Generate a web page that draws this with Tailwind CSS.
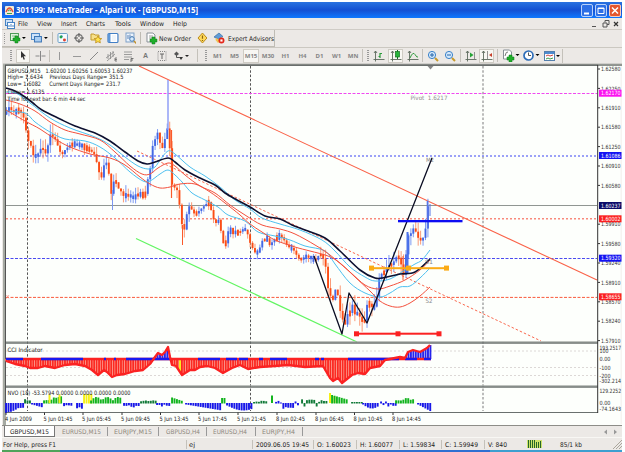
<!DOCTYPE html>
<html lang="en">
<head>
<meta charset="utf-8">
<title>301199: MetaTrader - Alpari UK - [GBPUSD,M15]</title>
<script src="https://cdn.jsdelivr.net/npm/@tailwindcss/browser@4"></script>
</head>
<body class="w-[625px] h-[452px] overflow-hidden bg-white font-['DejaVu_Sans','Noto_Sans',sans-serif] text-[6.5px] leading-none text-[#222]">
<svg class="hidden">
  <defs>
    <g id="plus"><path d="M7 6h3v2h2v3h-2v2h-3v-2h-2v-3h2z" fill="#1fae2a" stroke="#0b7a18" stroke-width=".5"/></g>
    <g id="lens"><circle cx="5" cy="5" r="3.6" fill="#d5e9fb" stroke="#3b82c9"/><path d="M8 8l3 3" stroke="#c89a2c" stroke-width="2"/></g>
    <g id="axes"><path d="M2.5 1v10.5M0.5 9.5h11M1 3l1.5-2L4 3" fill="none" stroke="#5c6a5c" stroke-width=".9"/></g>
  </defs>
</svg>
<div class="mt-[2px] ml-[2px] w-[620px] h-[450px] flex flex-col bg-[#ece9e6]">
  <!-- title bar -->
  <header class="h-[16px] shrink-0 flex items-center pl-[3px] pr-[1px] bg-linear-to-b from-[#2a72e0] via-[#1550d2] to-[#0e78ff] text-white">
    <svg class="w-[9px] h-[9px]" viewBox="0 0 9 9"><rect width="9" height="9" rx="1" fill="#f3ead6"/><path d="M1 6Q4.500-2 8 6" fill="none" stroke="#e0523c" stroke-width="1.4"/><path d="M2 7.500h5M3 5l1.500-1L6 5" stroke="#3a9f4c" fill="none"/></svg>
    <h1 class="ml-[2px] font-bold text-[8.500px] font-['Noto_Sans',sans-serif]"><span data-fit="182">301199: MetaTrader - Alpari UK - [GBPUSD,M15]</span></h1>
    <div class="ml-auto flex gap-[2px]">
      <svg class="w-[12px] h-[13px]" viewBox="0 0 12 13"><rect x=".5" y=".5" width="11" height="12" rx="1.500" fill="#2d6fe6" stroke="#b9d2fa"/><path d="M3 9.500h5" stroke="#fff" stroke-width="2"/></svg>
      <svg class="w-[12px] h-[13px]" viewBox="0 0 12 13"><rect x=".5" y=".5" width="11" height="12" rx="1.500" fill="#2d6fe6" stroke="#b9d2fa"/><path d="M3 4h6v5.500H3zM3 4.500h6" fill="none" stroke="#fff"/></svg>
      <svg class="w-[12px] h-[13px]" viewBox="0 0 12 13"><rect x=".5" y=".5" width="11" height="12" rx="1.500" fill="#e4572f" stroke="#f6cdbf"/><path d="M3 3.500l6 6M9 3.500l-6 6" stroke="#fff" stroke-width="1.500"/></svg>
    </div>
  </header>
  <!-- menu bar -->
  <nav class="h-[12px] shrink-0 flex items-center border-b border-[#cfccc6] pl-[3px]">
    <svg class="w-[10px] h-[10px]" viewBox="0 0 10 10"><rect x=".5" y=".5" width="7" height="6" fill="#cfe2f7" stroke="#4683c4"/><rect x="2.500" y="3.500" width="7" height="6" fill="#fff" stroke="#4683c4"/><path d="M4 8V6M6 8V5M8 8V6" stroke="#4683c4"/></svg>
    <span class="ml-[3px] w-[19px]" data-fit="10">File</span>
    <span class="w-[24px]" data-fit="15">View</span>
    <span class="w-[25px]" data-fit="16">Insert</span>
    <span class="w-[29px]" data-fit="19">Charts</span>
    <span class="w-[25px]" data-fit="16">Tools</span>
    <span class="w-[33px]" data-fit="24">Window</span>
    <span class="w-[25px]" data-fit="14">Help</span>
    <svg class="ml-auto mr-[2px] w-[30px] h-[10px]" viewBox="0 0 30 10"><path d="M2 7.500h4M13 4h4v4h-4zM15 3.500v-2h4v4h-2" fill="none" stroke="#555"/><path d="M24 3l4 4M28 3l-4 4" stroke="#333" stroke-width="1.200"/></svg>
  </nav>
  <!-- standard toolbar -->
  <div class="h-[17px] shrink-0 flex items-stretch">
    <div class="w-[273px] flex items-center border-r border-b border-[#bfbcb4]">
      <i class="ml-[2px] h-[11px] w-[2px] border-l border-dotted border-[#999]"></i>
      <svg class="ml-[3px] w-[18px] h-[12px]" viewBox="0 0 18 12"><rect x="1.500" y="1.500" width="8" height="7" fill="#e4f6e2" stroke="#4a9a55"/><path d="M3 4h5" stroke="#7cba80"/><use href="#plus" x="-1" y="-2"/><path d="M13 5h4l-2 2z"/></svg>
      <svg class="ml-[3px] w-[18px] h-[12px]" viewBox="0 0 18 12"><rect x="1.500" y="1.500" width="8" height="6" fill="#cfe4fa" stroke="#4a86c4"/><rect x="4.500" y="4.500" width="7" height="5.500" fill="#a8cdf2" stroke="#3b74b4"/><path d="M14 5h4l-2 2z"/></svg>
      <i class="mx-[4px] h-[12px] w-px bg-[#bdbab2]"></i>
      <svg class="w-[12px] h-[12px]" viewBox="0 0 12 12"><rect x="1" y="1.500" width="9.500" height="9" rx="1" fill="#f5fbff" stroke="#6b9fc8"/><path d="M3 4.500l2-1.500 1 2z" fill="#3a7ad2"/><circle cx="4" cy="5" r="1.500" fill="#22a34a"/><circle cx="7.500" cy="8" r="1.500" fill="#e0412f"/></svg>
      <svg class="ml-[4px] w-[12px] h-[12px]" viewBox="0 0 12 12"><circle cx="6" cy="6" r="3.300" fill="none" stroke="#777" stroke-width="1.200"/><path d="M6 1v4M6 7v4M1 6h4M7 6h4" stroke="#555"/></svg>
      <svg class="ml-[5px] w-[13px] h-[12px]" viewBox="0 0 13 12"><path d="M1 2h3l1 1h4v5H1z" fill="#f7e08a" stroke="#c29a2b"/><path d="M8 4l1.200 2.300 2.600.3-1.900 1.700.5 2.600L8 9.700l-2.400 1.200.5-2.600-1.900-1.700 2.600-.3z" fill="#ffe34d" stroke="#bd8b16" stroke-width=".8"/></svg>
      <svg class="ml-[4px] w-[12px] h-[12px]" viewBox="0 0 12 12"><rect x="1" y="1.500" width="10" height="9" rx="1" fill="#fff" stroke="#427fc5" stroke-width="1.200"/><path d="M1 2h2.500v8H1z" fill="#5d97d8"/><path d="M5 4h4M5 6h4M5 8h4" stroke="#c9dcef" stroke-width=".6"/></svg>
      <svg class="ml-[6px] w-[12px] h-[12px]" viewBox="0 0 12 12"><rect x="1" y="1" width="8" height="9" fill="#edf4fd" stroke="#7da0c7"/><path d="M3 7V3M5 6V2.500M7 7V4" stroke="#5a82b4"/><circle cx="7" cy="7" r="2.300" fill="#d9ebfc" stroke="#4379b2"/><path d="M9 9l2.500 2.500" stroke="#c08f2a" stroke-width="1.500"/></svg>
      <i class="mx-[4px] h-[12px] w-px bg-[#bdbab2]"></i>
      <svg class="ml-[1px] w-[12px] h-[13px]" viewBox="0 0 12 13"><path d="M1 1h6l2 2v7H1z" fill="#fff" stroke="#878f96"/><path d="M3 4h4M3 6h3" stroke="#999"/><use href="#plus" x="-1" y="-1"/></svg>
      <span class="ml-[1px] w-[38px]" data-fit="32">New Order</span>
      <svg class="w-[11px] h-[12px]" viewBox="0 0 11 12"><path d="M5.500 1L10 6l-4.500 5L1 6z" fill="#ffd95a" stroke="#b98a1c"/><path d="M5.500 3.500v3.200M5.500 8v1" stroke="#8a6510" stroke-width="1.200"/></svg>
      <svg class="ml-[5px] w-[12px] h-[12px]" viewBox="0 0 12 12"><path d="M1 5l5-4 4 3.500-4 3z" fill="#5f9bd6" stroke="#386fa6" stroke-width=".7"/><path d="M3 6l3 1.500L9 5v3.500L5 11 2.500 8z" fill="#f0c453"/><circle cx="8.500" cy="8.500" r="3" fill="#e3271b"/><rect x="7.400" y="7.400" width="2.200" height="2.200" fill="#fff"/></svg>
      <span class="ml-[3px]" data-fit="46">Expert Advisors</span>
    </div>
  </div>
  <!-- drawing, period and chart toolbars -->
  <div class="h-[16px] shrink-0 flex items-center border-t border-[#cbc8c1]">
    <i class="ml-[8px] mr-[4px] h-[11px] w-[2px] border-x border-dotted border-[#999]"></i>
    <span class="w-[14px] h-[14px] bg-[#f8f7f3] border border-[#cfccc4] flex items-center justify-center"><svg class="w-[8px] h-[10px]" viewBox="0 0 8 10"><path d="M2 0l5 5.200H4.700l1.200 3-1.200.6-1.300-3L2 7z" fill="#333"/></svg></span>
    <svg class="ml-[4px] w-[13px] h-[12px]" viewBox="0 0 13 12"><path d="M6.500 1v10M1.500 6h4M7.500 6h4" stroke="#888"/></svg>
    <i class="ml-[2px] h-[12px] w-px bg-[#c4c1ba]"></i>
    <svg class="ml-[4px] w-[12px] h-[12px]" viewBox="0 0 12 12"><path d="M5.500 2v8" stroke="#999"/></svg>
    <svg class="ml-[5px] w-[12px] h-[12px]" viewBox="0 0 12 12"><path d="M2 6.500h8" stroke="#999"/></svg>
    <svg class="ml-[5px] w-[12px] h-[12px]" viewBox="0 0 12 12"><path d="M2 10l8-8" stroke="#888"/></svg>
    <svg class="ml-[5px] w-[13px] h-[12px]" viewBox="0 0 13 12"><path d="M1 8l8-6M2 11l8-7M3 4v5M5.500 2v7M8 1v6" stroke="#888" stroke-width=".8"/><path d="M12 8h-2v3h2M10 9.500h2" stroke="#555" fill="none" stroke-width=".7"/></svg>
    <svg class="ml-[4px] w-[13px] h-[12px]" viewBox="0 0 13 12"><path d="M2 2h8M2 4.500h8M2 7h8M2 9.500h5" stroke="#888" stroke-width=".8"/><path d="M9 12V8.500h2.500M9 10h2" stroke="#555" fill="none" stroke-width=".8"/></svg>
    <span class="ml-[4px] w-[13px] text-center font-bold text-[7px] text-[#777] font-['Liberation_Sans',sans-serif]">A</span>
    <svg class="ml-[4px] w-[12px] h-[12px]" viewBox="0 0 12 12"><rect x="2" y="1.500" width="8" height="9" fill="none" stroke="#888" stroke-dasharray="1 1"/><path d="M4 4h4M6 4v5" stroke="#666"/></svg>
    <svg class="ml-[5px] w-[18px] h-[12px]" viewBox="0 0 18 12"><path d="M1 4l2.500-2.500L6 4 3.500 6z" fill="#555"/><path d="M3.500 5v2.500h3" fill="none" stroke="#555"/><path d="M6 7h4L8 10z" fill="#333"/><path d="M12 5h4l-2 2z" fill="#222"/></svg>
    <i class="ml-[6px] h-[13px] w-px bg-[#c4c1ba]"></i>
    <i class="ml-[7px] mr-[2px] h-[11px] w-[2px] border-x border-dotted border-[#999]"></i>
    <div class="flex items-center text-center text-[6px] font-bold font-['Noto_Sans',sans-serif] text-[#858585]">
      <span class="w-[17px]">M1</span><span class="w-[17px]">M5</span><span class="w-[16px] h-[14px] leading-[12px] bg-[#f8f7f3] border border-[#cfccc4]">M15</span><span class="w-[18px]">M30</span><span class="w-[17px]">H1</span><span class="w-[17px]">H4</span><span class="w-[17px]">D1</span><span class="w-[17px]">W1</span><span class="w-[16px]">MN</span>
    </div>
    <i class="ml-[1px] h-[13px] w-px bg-[#c4c1ba]"></i>
    <i class="ml-[4px] mr-[4px] h-[11px] w-[2px] border-x border-dotted border-[#999]"></i>
    <svg class="w-[12px] h-[12px]" viewBox="0 0 12 12"><use href="#axes"/><path d="M7 8V3M5.500 6.500H7M7 3.500h2" stroke="#2a9b3a" stroke-width="1.200"/></svg>
    <span class="ml-[3px] w-[15px] h-[14px] bg-[#f8f7f3] border border-[#cfccc4] flex items-center justify-center"><svg class="w-[12px] h-[12px]" viewBox="0 0 12 12"><use href="#axes"/><path d="M7.500 0v9" stroke="#136c20"/><rect x="5.500" y="1.500" width="4" height="5.500" fill="#27b53a" stroke="#147322" stroke-width=".7"/></svg></span>
    <svg class="ml-[4px] w-[12px] h-[12px]" viewBox="0 0 12 12"><use href="#axes"/><path d="M3 8Q6 1 8 4.500T11 7" fill="none" stroke="#2a9b3a"/></svg>
    <i class="ml-[3px] mr-[4px] h-[13px] w-px bg-[#c4c1ba]"></i>
    <svg class="w-[12px] h-[12px]" viewBox="0 0 12 12"><use href="#lens"/><path d="M3 5h4M5 3v4" stroke="#2464a8"/></svg>
    <svg class="ml-[5px] w-[12px] h-[12px]" viewBox="0 0 12 12"><use href="#lens"/><path d="M3 5h4" stroke="#2464a8"/></svg>
    <i class="ml-[4px] mr-[4px] h-[13px] w-px bg-[#c4c1ba]"></i>
    <svg class="w-[12px] h-[12px]" viewBox="0 0 12 12"><use href="#axes"/><path d="M5 2.500v5L8.500 5z" fill="#25a336"/><path d="M9.500 2v7" stroke="#777" stroke-width=".8"/></svg>
    <span class="ml-[2px] w-[15px] h-[14px] bg-[#f8f7f3] border border-[#cfccc4] flex items-center justify-center"><svg class="w-[12px] h-[12px]" viewBox="0 0 12 12"><use href="#axes"/><path d="M6.500 1v8" stroke="#777" stroke-width=".8"/><path d="M11 3v4L8 5z" fill="#c6402c"/></svg></span>
    <i class="ml-[3px] mr-[4px] h-[13px] w-px bg-[#c4c1ba]"></i>
    <svg class="w-[18px] h-[13px]" viewBox="0 0 18 13"><path d="M1.500 1h6l2 2v7h-8z" fill="#fff" stroke="#878f96"/><path d="M3 7q1-5 3-4" fill="none" stroke="#777"/><use href="#plus"/><path d="M13.500 5h4l-2 2z"/></svg>
    <svg class="ml-[3px] w-[18px] h-[13px]" viewBox="0 0 18 13"><circle cx="5.500" cy="6.500" r="4.500" fill="#fff" stroke="#2c6cb8" stroke-width="1.700"/><path d="M5.500 3.500v3h2.500" fill="none" stroke="#555"/><path d="M12.500 5h4l-2 2z"/></svg>
    <svg class="ml-[3px] w-[18px] h-[12px]" viewBox="0 0 18 12"><rect x=".5" y="1.500" width="10" height="9" fill="#fff" stroke="#5480ad"/><path d="M1 3h9" stroke="#4d8bd0" stroke-width="2"/><path d="M2 6l2-1 2 1 3-1" stroke="#c44" fill="none"/><path d="M2 9l2-1 2 1 3-1" stroke="#3a9c4a" fill="none"/><path d="M12 5h4l-2 2z"/></svg>
    <i class="h-[14px] w-px bg-[#c4c1ba]"></i>
  </div>
  <!-- chart window: units are window pixels -->
  <svg id="chart" class="w-[620px] h-[362px] shrink-0 block" viewBox="2 63 620 362" font-family="'DejaVu Sans','Noto Sans',sans-serif"></svg>
  <!-- chart tabs -->
  <div class="h-[12px] shrink-0 flex items-center text-[#8c887c] text-[6.3px] border-t border-[#8d8d88]">
    <span class="ml-[2px] w-[51px] h-[11px] bg-white border-x border-b border-[#777] text-[#222] pl-[5px] pt-px" data-fit="39">GBPUSD,M15</span>
    <span class="w-[53px] pl-[7px] border-r border-[#999]" data-fit="39">EURUSD,M15</span>
    <span class="w-[51px] pl-[6px] border-r border-[#999]" data-fit="38">EURJPY,M15</span>
    <span class="w-[48px] pl-[7px] border-r border-[#999]" data-fit="34">GBPUSD,H4</span>
    <span class="w-[49px] pl-[6px] border-r border-[#999]" data-fit="34">EURUSD,H4</span>
    <span class="w-[47px] pl-[6px] border-r border-[#999]" data-fit="33">EURJPY,H4</span>
    <svg class="ml-auto mr-[2px] w-[18px] h-[8px]" viewBox="0 0 18 8"><path d="M5 1.500v5L2 4zM12 1.500v5L15 4z" fill="#999"/></svg>
  </div>
  <!-- status bar -->
  <footer class="h-[13px] shrink-0 flex items-center border-t border-[#f8f7f4] text-[#222]">
    <span class="ml-[1px] w-[183px]" data-fit="53">For Help, press F1</span>
    <span class="w-[66px] border-l border-[#c4c1ba] pl-[2px]" data-fit="6">ej</span>
    <span class="w-[61px] border-l border-[#c4c1ba] pl-[3px]" data-fit="53">2009.06.05 19:45</span>
    <span class="w-[43px] border-l border-[#c4c1ba] pl-[3px]" data-fit="34">O: 1.60023</span>
    <span class="w-[43px] border-l border-[#c4c1ba] pl-[3px]" data-fit="33">H: 1.60077</span>
    <span class="w-[42px] border-l border-[#c4c1ba] pl-[3px]" data-fit="32">L: 1.59834</span>
    <span class="w-[43px] border-l border-[#c4c1ba] pl-[3px]" data-fit="33">C: 1.59949</span>
    <span class="w-[40px] border-l border-[#c4c1ba] pl-[3px]" data-fit="19">V: 840</span>
    <svg class="ml-[3px] w-[15px] h-[8px]" viewBox="0 0 15 8"><rect width="15" height="8" fill="#cde36a"/><path d="M1.500 0v8M3.500 0v8M5.500 0v8M7.500 0v8M9.500 2v6M11.500 2v6M13.500 1v7" stroke="#25652b"/></svg>
    <span class="ml-[18px]" data-fit="22">85/1 kb</span>
    <svg class="ml-auto w-[9px] h-[9px]" viewBox="0 0 9 9"><path d="M0 9l9-9M3 9l6-6M6 9l3-3" stroke="#aaa69c"/></svg>
  </footer>
  <div class="h-[2px] shrink-0 flex"><i class="w-[58px] bg-[#4fa35a]"></i><i class="w-[430px] bg-[#2f6fd2]"></i><i class="grow bg-[#3d9fd0]"></i></div>
</div>
<script>
const out = [];
const line = (x1, y1, x2, y2, c, w = 1, d = '') => out.push(`<line x1="${x1}" y1="${y1}" x2="${x2}" y2="${y2}" stroke="${c}" stroke-width="${w}" ${d ? `stroke-dasharray="${d}"` : ''}/>`);
const rect = (x, y, w, h, c) => out.push(`<rect x="${x}" y="${y}" width="${w}" height="${h}" fill="${c}"/>`);
const poly = (p, c, w = 1) => out.push(`<polyline points="${p}" fill="none" stroke="${c}" stroke-width="${w}" stroke-linejoin="round"/>`);
const text = (x, y, s, w, c = '#222', size = 6) => out.push(`<text x="${x}" y="${y}" fill="${c}" font-size="${size}" textLength="${w}" lengthAdjust="spacingAndGlyphs">${s.replace(/ {2,}/g, m => '\u00a0'.repeat(m.length))}</text>`);
// Smooth curve through the listed points
function curve(s, c, w) {
  const p = s.split(' ').map(q => q.split(',').map(Number));
  let d = `M${p[0]}`;
  for (let i = 0; i < p.length - 1; i++) {
    const a = p[i - 1] || p[i], b = p[i], e = p[i + 1], f = p[i + 2] || e;
    d += `C${b[0] + (e[0] - a[0]) / 6},${b[1] + (e[1] - a[1]) / 6} ${e[0] - (f[0] - b[0]) / 6},${e[1] - (f[1] - b[1]) / 6} ${e}`;
  }
  out.push(`<path d="${d}" fill="none" stroke="${c}" stroke-width="${w}"/>`);
}
function sampler(s) {
  const p = s.split(' ').map(q => q.split(',').map(Number));
  return x => {
    let i = 1;
    while (i < p.length - 1 && p[i][0] < x) i++;
    const a = p[i - 1], b = p[i];
    return a[1] + (b[1] - a[1]) * Math.max(0, Math.min(1, (x - a[0]) / (b[0] - a[0])));
  };
}
let seed = 11;
const rnd = () => (seed = (seed * 16807) % 2147483647) / 2147483647;

// Window frame and panes
rect(2, 63, 620, 362, '#ece9e6');
rect(3, 64, 619, 361, '#a5a9a2');
rect(6, 66, 616, 359, '#fdfffc');
rect(3, 63.5, 619, 1, '#b4b6b0'); rect(5, 64.5, 593, 1.300, '#5d6260'); rect(598, 64.5, 24, 1, '#7b807c');
rect(620.500, 66, 1.500, 358, '#f6f4f1');

// Levels and period separators
for (const x of [27.5, 250.5]) line(x, 66, x, 411, '#555', 1, '2.500 1.800');
line(483, 66, 483, 411, '#999', 1.300, '2.500 1.800');
line(6, 93.5, 597, 93.500, '#f04af0', 1, '3 1.500');
line(6, 156, 597, 156, '#7b83f5', 1.300, '2 2');
line(6, 205.5, 597, 205.5, '#909692', 1);
line(6, 218.8, 597, 218.8, '#f98a7c', 1.400, '2 2');
line(6, 258.5, 597, 258.5, '#4a4af0', 1, '3 1.500');
line(6, 297.4, 597, 297.4, '#f95a3c', 1, '3 1.500');
line(139, 66, 597, 280, '#fa6248', 1.100);
line(137, 151, 541, 341, '#fa6a50', 1, '2.500 2');
line(136, 238.5, 357, 342, '#62f562', 1.200);

// Candles
const mid = sampler('6,113 9,107 12,111 15,113 18,109 22,114 25,121 27,140 30,142 33,155 36,157 39,152 42,146 45,155 48,145 50,134 53,137 56,140 59,150 62,155 65,150 68,147 71,144 80,145 85,148 90,150 95,155 98,168 101,180 104,165 107,162 109,175 111,195 113,185 115,175 117,188 120,189 123,196 128,195 133,198 138,194 145,196 148,178 151,165 153,142 156,138 158,131 161,149 164,147 166,128 169,129 171,183 174,187 177,190 180,208 182,225 184,232 186,217 189,206 192,210 195,215 200,210 205,205 210,201 212,217 216,223 219,219 222,238 225,250 227,232 230,230 235,233 240,232 244,228 247,232 251,246 254,250 256,255 259,250 262,241 265,239 268,238 270,247 273,240 276,238 280,235 284,240 288,247 292,248 295,252 298,258 301,260 305,256 309,257 312,259 316,260 320,253 323,258 326,268 328,288 330,295 333,300 335,290 337,288 339,306 342,318 345,325 348,312 350,313 352,303 355,315 358,312 361,320 364,325 366,310 368,300 370,305 373,308 376,305 378,285 380,275 384,272 388,265 392,265 396,257 400,258 403,275 405,274 407,235 410,236 413,228 416,232 419,240 422,241 424,235 427,222 428,205 431,208');
const step = 2.436;
for (let i = 0; i < 174; i++) {
  const x = 6.5 + i * step;
  let o = mid(x - step), c = mid(x);
  if (Math.abs(c - o) < 2) { const m = (o + c) / 2, s = rnd() > .5 ? 1 : -1, h = 1 + rnd() * 2.5; o = m - s * h; c = m + s * h; }
  const quiet = x > 190 && x < 320 || x > 60 && x < 95 ? .6 : x > 320 || x < 60 ? 1.3 : 1;
  const hi = Math.min(o, c) - rnd() * 8 * quiet, lo = Math.max(o, c) + rnd() * 8 * quiet;
  const up = c < o;
  line(x, hi, x, lo, up ? '#6f8ff0' : '#f98e68', .9);
  rect(x - .95, Math.min(o, c), 1.900, Math.abs(c - o), up ? '#4468e4' : '#fb4d16');
}
line(168, 80, 168, 130, '#8f9ff6', 1.500);
line(171.5, 130, 171.5, 198, '#fb5a2a', 1.200);
line(182.5, 225, 182.5, 245, '#fb5a2a', 1);
line(112.5, 190, 112.5, 210, '#7c97f0', 1);
line(427.5, 201, 427.5, 228, '#5576e8', 1.600);
line(430, 204, 430, 216, '#5576e8', 1);
line(403, 256, 403, 280, '#fb5a2a', 1);
line(407.5, 232, 407.5, 273, '#4c74ea', 2);

// Moving averages
curve('6,111 25,113 35,122 50,132 65,139 85,141 100,147 115,158 130,172 143,181 150,181 160,174 168,170 175,175 183,183 192,193 205,200 218,207 228,215 245,221 258,232 275,236 290,240 305,246 325,251 335,264 350,283 365,293 380,297 390,293 400,287 410,286 420,278 430,268', '#4cc0f0', 1);
curve('6,92 16,93 30,103 50,118 70,128 95,137 110,145 125,157 138,166 148,169 155,167 160,160 168,151 175,154 190,167 205,176 220,187 235,200 250,209 262,218 280,224 300,230 322,240 335,251 350,267 365,277 375,281 390,279 405,270 415,264 422,260 430,250', '#4cc0f0', 1);
curve('6,100 20,104 35,111 50,122 65,130 80,134 100,140 115,152 130,166 142,174 150,174 158,168 168,163 175,166 185,175 200,186 215,193 230,205 245,215 262,225 280,229 295,234 315,245 330,255 350,272 365,285 378,289 390,286 405,280 420,270 430,260', '#f4503c', 1);
curve('6,110 25,121 40,129 55,139 70,147 90,154 110,158 125,165 140,177 150,184 160,188 170,187 180,184 195,184 210,192 225,203 240,215 250,224 262,232 275,240 295,247 310,251 328,256 340,263 355,277 370,291 380,301 390,306 400,307 410,303 420,296 430,287', '#f4503c', 1);
curve('6,88 15,91 25,97 33,103 42,110 60,119 75,126 95,133 110,141 125,152 138,161 147,164 155,162 168,158 175,162 185,170 200,178 215,185 225,193 237,200 250,207 265,216 280,219 292,225 305,230 325,238 340,251 360,270 375,278 385,277.500 400,274 415,272 430,259', '#0c1030', 1.600);

// Drawn objects
text(426, 162, 'M2', 8, '#888'); text(425, 264, 'S1', 8, '#888'); text(425.5, 303, 'S2', 7, '#888');
text(410.5, 99.5, 'Pivot  1.6217', 37, '#8f8f8f', 6);
poly('314,256 342,334 349,293 367,323 432,158', '#0a0d22', 1.300);
rect(398, 220, 64.500, 2.300, '#0d0df2');
rect(371, 267.2, 75, 2, '#fbab15'); for (const x of [369, 406, 444]) rect(x, 265.600, 5, 5, '#fbab15');
rect(356, 332.7, 83, 2, '#fb2222'); for (const x of [354, 395.5, 436.500]) rect(x, 331.300, 5, 5, '#fb2222');
out.push('<path d="M427.500 66h6l-3 3.500z" fill="#888"/>');
out.push('<path d="M6.500 295l2.500 3.500M9 295l-2.500 3.500" stroke="#f98a7c" stroke-width=".7"/>');

// Pane dividers
for (const y of [341.3, 385.300]) { rect(5, y, 593, 1, '#a4aaa6'); rect(5, y + 1, 593, 1.400, '#626866'); }
line(5, 412.5, 598, 412.5, '#6a706e', 1.200);
line(597.7, 65, 597.7, 413, '#333', 1);
line(5.500, 65, 5.500, 413, '#555', 1);

// CCI
for (const y of [351, 367.5, 375.500]) line(6, y, 597, y, '#dcd8d6', 1, '2 2');
const cciPts = '6,361 15,364 25,366 30,368 38,368 45,366 55,368 65,365 75,364 85,366 92,370 98,375 104,370 107,372 112,377 117,375 125,374 135,371 143,370 150,364 155,357 158,353 162,355 165,352 168,347 170,357 172,365 176,366 182,375 190,370 195,370 200,367 207,366 215,368 223,373 232,368 240,365 248,369 260,367 275,366 288,365 305,367 323,366 330,378 333,381 338,378 342,383 352,375 358,373 365,374 370,368 380,366 385,360 400,357 405,358 408,352 413,350 420,352 427,348 430,345';
const cci = sampler(cciPts);
for (let x = 6.5; x < 431; x += step) {
  const y = cci(x), h = Math.abs(y - 359), top = Math.min(y, 359);
  if (y < 358.5) rect(x - .9, top, 1.900, h, '#2424ee');
  else { rect(x - 1.25, top, 2.5, h, '#fca294'); rect(x - .9, top, 1.800, h, '#fb2a22'); }
}
rect(179, 360, 2, 11, '#f8ea20');
line(6, 359, 431, 359, '#fb2222', 2.600);
for (const [a, b] of [[6, 23], [41, 83], [104, 106], [114, 116], [126, 170], [198, 220], [226, 237], [239, 248], [259, 263], [270, 287], [315, 319], [321, 324], [348, 399], [405, 417], [424, 431]]) line(a, 359, b, 359, '#1818f0', 2.400);
poly(cciPts, '#fb2222', 2.300);

// NVO
const bars = (a, b, f) => { for (let x = a; x < b; x += step) { const [h, c] = f((x - a) / (b - a)); rect(x - .9, h > 0 ? 403 - h : 403, 1.900, Math.abs(h) + .5, c); } };
const B = '#1818e8', G = '#12b41e', D = '#117a38', Y = '#f6f018';
bars(6, 24, t => [-(8 - t * 6 + rnd() * 2), B]);
bars(25, 31, t => [2 + rnd() * 2, D]);
bars(32, 43, t => [-(1 + t * 3), B]);
bars(44, 62, t => [2 + t * 3 + rnd() * 2, G]);
rect(48.5, 394.500, 2, 8.500, Y); rect(58.5, 394.500, 2, 8.500, Y);
bars(64, 72, t => [-(1.500 + rnd() * 2), B]);
bars(77, 84, t => [-(3 + rnd() * 2.500), B]);
bars(84, 92, t => [9, Y]);
bars(91, 122, t => [2.500 + 3.500 * Math.abs(Math.sin(t * 9)), G]);
bars(124, 140, t => [-(1 + 3 * rnd()), B]);
bars(141, 156, t => [1 + 3 * rnd(), D]);
bars(157, 171, t => [-(1 + 2.500 * rnd()), B]);
bars(172, 184, t => [5.500 - t * 4, G]);
bars(186, 222, t => [-(1 + t * 6), B]);
bars(222, 226, t => [5, G]);
bars(227, 252, t => [-(2 + 5 * Math.sin(t * 2.400)), B]);
bars(254, 268, t => [1 + 3 * rnd() * t, D]);
rect(271, 395.5, 2, 7.500, G);
bars(276, 300, t => [rnd() > .4 ? -(1 + 4.500 * rnd()) : 2.500 * rnd(), B]);
bars(302, 328, t => [rnd() > .25 ? 1 + 3 * rnd() : -3, D]);
rect(329, 393, 2, 10, Y); rect(333.500, 396, 2, 7, Y);
bars(332, 349, t => [8 - t * 5, G]);
bars(352, 362, t => [1, D]);
bars(363, 380, t => [-(1 + 4 * Math.sin(t * 3)), B]);
bars(381, 396, t => [rnd() > .4 ? -(1 + 2 * rnd()) : 1.500, B]);
bars(396, 414, t => [2 + 3.500 * rnd(), G]);
bars(418, 431, t => [-(1 + t * 7), B]);

// Pane captions
text(7.5, 73, 'GBPUSD,M15   1.60200 1.60256 1.60053 1.60237', 125);
text(7.5, 79.2, 'High= 1.6434    Previous Days Range= 351.5', 116);
text(7.5, 86.2, 'Low= 1.6082     Current Days Range= 231.7', 113);
text(7.5, 93.5, 'Close= 1.6135', 37);
text(7.5, 101, 'Time for next bar: 6 min 44 sec', 78);
text(7.5, 351.800, 'CCI Indicator', 35);
text(7.5, 394.5, 'NVO (18) -53.5794 0.0000 0.0000 0.0000 0.0000', 123);

// Price scale
const prices = ['1.62580', '1.62250', '1.61910', '1.61580', '1.61250', '1.60910', '1.60580', '', '1.59910', '1.59580', '1.59240', '1.58910', '1.58570', '1.58240', '1.57910'];
prices.forEach((p, i) => { if (p) { const y = 69 + i * 19.4; line(598, y, 600, y, '#333'); text(601, y + 2.200, p, 19.500, '#333', 5.8); } });
for (const [y, c, p] of [[93.2, '#fb12f0', '1.62170'], [155.5, '#1212f2', '1.61086'], [205.5, '#0a0a68', '1.60237'], [218.8, '#fb2020', '1.60002'], [258.2, '#1212f2', '1.59320'], [296.8, '#fb2020', '1.58655']]) {
  rect(599, y - 3.500, 22.500, 7, c); text(601, y + 2.200, p, 19.500, '#fff', 5.8);
}
for (const [y, s, w] of [[349.5, '193.2517', 21.5], [353, '100', 9], [361.3, '0.00', 11], [369.8, '-100', 11], [377.6, '-200', 11], [383, '-302.214', 21.5], [393, '129.2252', 21.5], [405, '0.00', 11], [411, '-74.1643', 21.5]]) text(599.5, y, s, w, '#333', 5.8);

// Time scale
for (const [x, s, w] of [[5, '4 Jun 2009', 27], [43.5, '5 Jun 01:45', 29], [82, '5 Jun 05:45', 29], [121, '5 Jun 09:45', 29], [159.5, '5 Jun 13:45', 29], [198, '5 Jun 17:45', 29], [237, '5 Jun 21:45', 29], [276, '8 Jun 02:45', 29], [315, '8 Jun 06:45', 29], [353.5, '8 Jun 10:45', 29], [392, '8 Jun 14:45', 29]]) {
  line(x + 1, 412.5, x + 1, 415, '#333'); text(x, 420.8, s, w, '#222', 6);
}
document.getElementById('chart').innerHTML = out.join('');

// Labels drawn at the condensed width of their slot
for (const el of document.querySelectorAll('[data-fit]')) {
  const w = el.dataset.fit;
  el.innerHTML = `<svg width="${w}" height="9" overflow="visible" style="display:block"><text y="6.8" fill="currentColor" textLength="${w}" lengthAdjust="spacingAndGlyphs">${el.textContent}</text></svg>`;
}
</script>
</body>
</html>
